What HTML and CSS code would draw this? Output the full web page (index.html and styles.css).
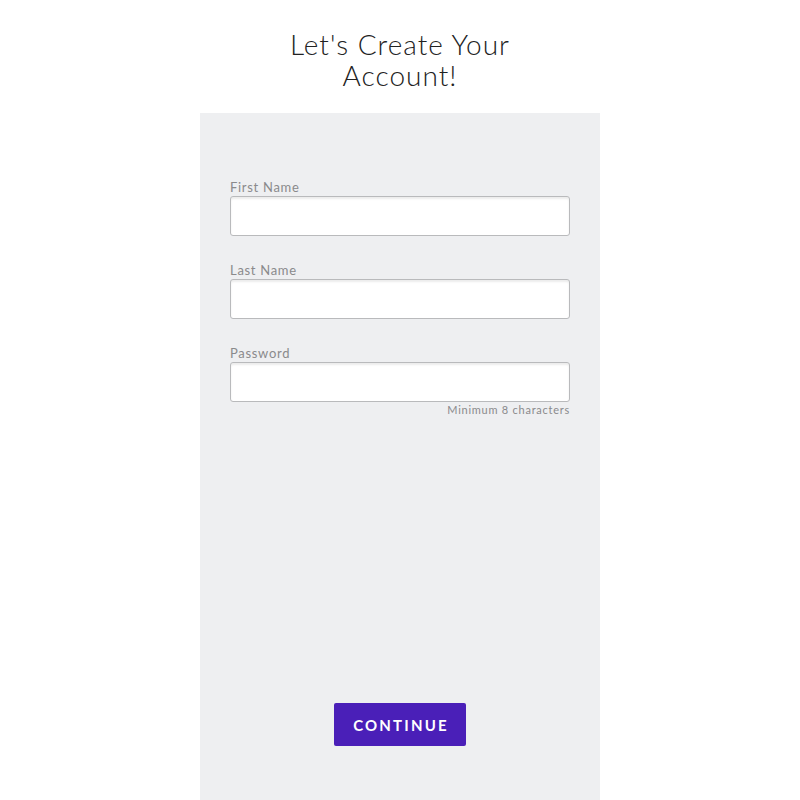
FILE: index.html
```html
<!DOCTYPE html>
<html>
<head>
<meta charset="utf-8">
<link rel="stylesheet" href="styles.css">
</head>
<body>
<header class="header">
  <h1 class="title">Let's Create Your<br>Account!</h1>
</header>
<main class="panel">
  <form class="form">
    <div class="field">
      <label class="label">First Name</label>
      <input class="input" type="text">
    </div>
    <div class="field">
      <label class="label">Last Name</label>
      <input class="input" type="text">
    </div>
    <div class="field">
      <label class="label">Password</label>
      <input class="input" type="password">
      <div class="hint">Minimum 8 characters</div>
    </div>
  </form>
  <div class="actions">
    <button class="button" type="button">CONTINUE</button>
  </div>
</main>
</body>
</html>
```
FILE: styles.css
```css
html, body {
  margin: 0;
  padding: 0;
  background: #ffffff;
  font-family: "Lato", "Open Sans", sans-serif;
}
.header {
  padding-top: 29px;
  height: 113px;
  box-sizing: border-box;
  text-align: center;
}
.title {
  margin: 0;
  font-size: 28px;
  line-height: 31px;
  font-weight: 300;
  color: #222222;
  letter-spacing: 1px;
}
.panel {
  width: 400px;
  height: 687px;
  margin: 0 auto;
  background: #eeeff1;
  box-sizing: border-box;
  padding: 66px 30px 0;
}
.form {
  display: flex;
  flex-direction: column;
  gap: 26px;
}
.field {
  display: flex;
  flex-direction: column;
}
.label {
  font-size: 13px;
  line-height: 17px;
  color: #8a8a8c;
  letter-spacing: 0.7px;
}
.input {
  height: 40px;
  box-sizing: border-box;
  margin: 0;
  border: 1px solid #b9babc;
  border-radius: 3px;
  background: #ffffff;
  box-shadow: inset 0 2px 2px rgba(0,0,0,0.08);
}
.hint {
  align-self: flex-end;
  font-size: 11px;
  line-height: 14px;
  margin-top: 1px;
  color: #8a8a8c;
  letter-spacing: 0.75px;
}
.actions {
  display: flex;
  justify-content: center;
  margin-top: 286px;
}
.button {
  width: 132px;
  height: 43px;
  border: none;
  border-radius: 2px;
  background: #4a1fb8;
  color: #ffffff;
  font-family: "Lato", sans-serif;
  font-weight: 700;
  font-size: 15px;
  letter-spacing: 2.2px;
  padding: 0 0 0 2px;
  cursor: pointer;
}
```
